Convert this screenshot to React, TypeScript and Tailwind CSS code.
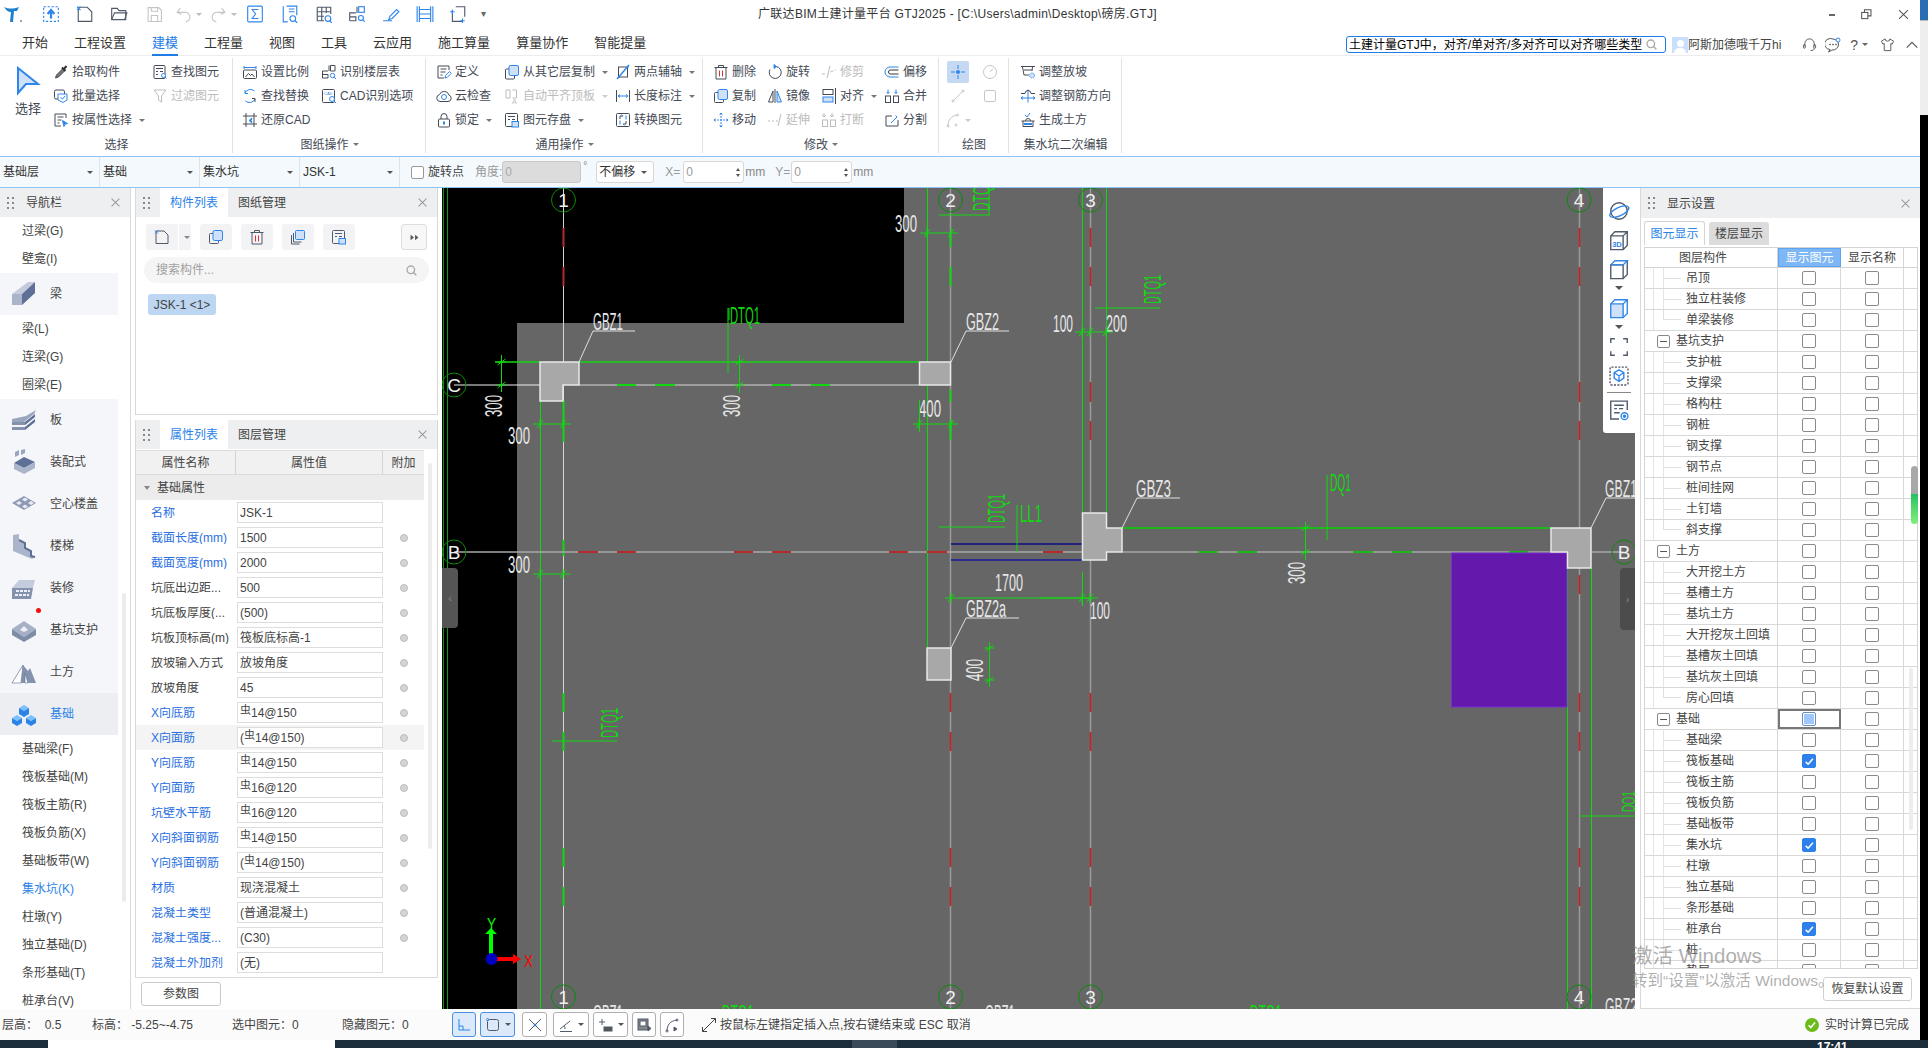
import React from 'react';

const B = '#2f86ea';
const F = '#cfe1f8';

type P = { children: React.ReactNode; s?: number; className?: string };
const I = ({ children, s = 16, className = '' }: P) => (
  <svg viewBox="0 0 16 16" width={s} height={s} fill="none" stroke="currentColor" strokeWidth="1" className={`shrink-0 ${className}`}>
    {children}
  </svg>
);

const icons: Record<string, React.ReactNode> = {
  pick: <><path d="M2.5 14l1-3 6-6 2 2-6 6z" fill="#777" /><path d="M9 3.5l3.5 3.5M11 5l2.5-3" stroke="#333" strokeWidth="2" /></>,
  batch: <><rect x="1.5" y="2" width="10" height="9" rx="1.5" /><path d="M5 6h9v6l-4 2.5L5 12z" stroke={B} fill="#fff" /><path d="M7.5 9.5l2 1.5 2.5-3" stroke={B} /></>,
  attr: <><path d="M13 6V2H2v12h6" /><path d="M4.5 5h6M4.5 8h4M4.5 11h2" /><path d="M9.5 8.5l5 3-2.5.6-1 2.4z" fill={B} stroke={B} /></>,
  find: <><rect x="2" y="1.5" width="11" height="13" rx="1" /><path d="M4 4.5h7M4 7.5h2M8 7.5h3M4 10.5h2" /><circle cx="11.5" cy="11.5" r="2" stroke={B} fill="#fff" /><path d="M13 13l1.5 1.5" stroke={B} /></>,
  filter: <><path d="M2 2h12L9.5 8v6l-3-2V8z" /></>,
  scale: <><path d="M2 2v3M14 2v3M2 3.5h12" stroke={B} /><rect x="1.5" y="6" width="13" height="8.5" rx="1" /><path d="M3.5 13l3-3.5 2 2 1.5-1.5 2.5 3" /></>,
  swap: <><path d="M12.5 3A6 6 0 0 0 3 5M3.5 13a6 6 0 0 0 9.5-2" stroke={B} /><path d="M3 2v3.5h3" stroke={B} /><path d="M13 14v-3.500h-3" /></>,
  restore: <><path d="M1 4h14M1 12h14M4 1v14M12 1v14" /><path d="M10 6L7 8.500l3 2.500-1-2.500z" fill={B} stroke={B} /></>,
  floor: <><path d="M8 1.500v5.500M1.500 14V7H7M1.500 10.500H7V14H1.500" /><path d="M9.500 1.500H14V7H9.500z" /><circle cx="11.500" cy="11.500" r="2.200" stroke={B} /><path d="M13 13l2 2" stroke={B} /></>,
  cad: <><rect x="1.500" y="1.500" width="12" height="13" rx="1" /><text x="3" y="6.500" fontSize="4" fill={B} stroke="none">CAD</text><circle cx="11" cy="11" r="2.500" stroke={B} fill="#fff" /><path d="M13 13l2 2" stroke={B} /></>,
  define: <><path d="M13 6V2H2v12h6" /><path d="M4.500 5h6M4.500 8h5M4.500 11h2" /><path d="M9 14l.5-2.500 4-4 1.800 1.800-4 4z" stroke={B} /></>,
  cloud: <><path d="M4 13.500a3.500 3.500 0 0 1-.5-6.900 5 5 0 0 1 9.500.5 3.300 3.300 0 0 1-1 6.400z" /><circle cx="8" cy="9" r="2.500" stroke={B} /></>,
  lock: <><rect x="2.500" y="7" width="11" height="8" rx="1" /><path d="M5 7V4.500a3 3 0 0 1 6 0V7" /><path d="M8 9.500v3" stroke={B} strokeWidth="2" /></>,
  fromfloor: <><rect x="1.500" y="5" width="9" height="10" rx="1" /><rect x="5" y="1.500" width="9.500" height="10" rx="1.500" fill={F} stroke={B} /></>,
  autotop: <><path d="M2 2h4v8H2zM8.500 2h4v8h-4" /><text x="8" y="15.500" fontSize="7" fill="currentColor" stroke="none">A</text></>,
  save: <><rect x="1.500" y="1.500" width="12" height="13" rx="1" /><path d="M4 4.500h7M4 7.500h2M8 7.500h3" /><rect x="8" y="9.500" width="6.500" height="5.500" fill={F} stroke={B} /></>,
  axis: <><rect x="3.500" y="3" width="9" height="10" /><path d="M2 15L14 1" stroke={B} strokeWidth="1.500" /><path d="M3.500 13h1M12.500 3h1" stroke={B} strokeWidth="2" /></>,
  length: <><path d="M1.500 2v12M14.500 2v12" /><path d="M3 8h10M3 8l2-1.500M3 8l2 1.500M13 8l-2-1.500M13 8l-2 1.500" stroke={B} /></>,
  convert: <><rect x="1.500" y="1.500" width="13" height="13" rx="1" /><path d="M5 7V4h3M11 9v3H8" /><path d="M8 4l-1.500-1.500M8 12l1.500 1.500M11 3.500v4M5 8.500v4" stroke={B} /></>,
  del: <><path d="M1.500 3.500h13M5.500 3V1.500h5V3" /><path d="M3 3.500h10V15H3z" /><path d="M6.500 6.500v6M9.500 6.500v6" stroke="#e03030" /></>,
  rotate: <><path d="M9 2.500a6 6 0 1 1-6 3" /><path d="M7 .5l2.500 2-2.500 2z" fill={B} stroke={B} /></>,
  trim: <><path d="M1 10h4M7 10l.5-.2M9.500 8l5-2" strokeDasharray="3 1.500" /><path d="M6 14L9 2" /></>,
  offset: <><path d="M14.500 3H6a5 5 0 0 0 0 10h8.500" stroke={B} /><path d="M14.500 6H6.500a2 2 0 0 0 0 4h8" stroke="#333" /></>,
  copy: <><rect x="1.500" y="4.500" width="9" height="10" rx="1" /><rect x="5" y="1.500" width="9.500" height="10" rx="1.500" fill={F} stroke={B} /></>,
  mirror: <><path d="M8 1v14" /><path d="M6 3L1.500 14H6z" /><path d="M10 3l4.500 11H10z" stroke={B} fill={F} /></>,
  align: <><rect x="2" y="1.500" width="10" height="5" /><rect x="2" y="9" width="10" height="5" stroke={B} fill={F} /><path d="M14.500 0v16" /></>,
  merge: <><path d="M4 1.500v4M12 1.500v4M2.500 4L4 5.500 5.500 4M10.500 4l1.500 1.500L13.500 4" stroke={B} /><rect x="1.500" y="8" width="5" height="6.500" /><rect x="9.500" y="8" width="5" height="6.500" /></>,
  move: <path d="M8 1v14M1 8h14M8 1L6.500 3M8 1l1.500 2M8 15l-1.500-2M8 15l1.500-2M1 8l2-1.500M1 8l2 1.500M15 8l-2-1.500M15 8l-2 1.500" stroke={B} strokeDasharray="2 1" />,
  extend: <path d="M1 9h2M5 9h2M9 9h2M11 14l3-12" />,
  breakk: <><path d="M3 1v3M11 1v3M1 3l2 2 2-2M9 3l2 2 2-2" /><rect x="1.500" y="8" width="5" height="6.500" /><rect x="9.500" y="8" width="5" height="6.500" /></>,
  split: <><path d="M14 8v6H2V4h6" /><path d="M7 11l6-6-1.500-1.500" stroke={B} /></>,
  snap: <path d="M8 1v4M8 11v4M1 8h4M11 8h4" stroke={B} />,
  dial: <><circle cx="8" cy="8" r="6.500" /><path d="M8 8l3-3.500" /></>,
  line: <><path d="M3 13L13 3" /><circle cx="3" cy="13" r="1" /><circle cx="13" cy="3" r="1" /></>,
  rect: <rect x="2.500" y="2.500" width="11" height="11" rx="1.500" />,
  arc: <><path d="M3 14c0-6 3-10 9-11" /><circle cx="3" cy="14" r="1" /><circle cx="12.500" cy="3" r="1" /><circle cx="11" cy="13" r="1" /></>,
  slope: <><path d="M1 2.500h14" /><path d="M2.500 3l1.500 8h5" /><path d="M12.500 3l-.5 4M4 6h8" /><circle cx="12" cy="11.500" r="2.500" fill={F} stroke={B} strokeDasharray="1 1" /></>,
  rebar: <><path d="M8 1.500v13M1 10h14" stroke={B} /><path d="M1 5.500h4a3 3 0 0 1 6 0h4" /><path d="M1 10l2-1.500M1 10l2 1.500M15 10l-2-1.500M15 10l-2 1.500" stroke={B} /></>,
  earth: <><path d="M1.500 9h13" /><path d="M3 9v5.500h10V9" /><path d="M5.500 9a2.500 2.500 0 0 1 5 0" /><path d="M5 3l2 2 3-4" stroke={B} /><path d="M4 12h8" stroke={B} strokeWidth="2" /></>,
};

const Ar = ({ c = '#777' }: { c?: string }) => <span className="inline-block w-0 h-0 border-x-[3px] border-x-transparent border-t-[3px] ml-1" style={{ borderTopColor: c }} />;

const Item = ({ ic, t, arrow, off }: { ic: string; t: string; arrow?: boolean; off?: boolean }) => (
  <div className={`h-6 flex items-center gap-[3px] whitespace-nowrap ${off ? 'text-[#bcbcbc]' : 'text-[#444a55]'}`}>
    <I>{icons[ic]}</I>
    <span>{t}</span>
    {arrow && <Ar c={off ? '#ccc' : '#777'} />}
  </div>
);

type It = [string, string, boolean?, boolean?];
const Col = ({ w, items }: { w: string; items: It[] }) => (
  <div className={`flex flex-col ${w}`}>
    {items.map((i) => <Item key={i[1]} ic={i[0]} t={i[1]} arrow={i[2]} off={i[3]} />)}
  </div>
);

const Group = ({ w, pl, label, arrow, children }: { w: string; pl: string; label: string; arrow?: boolean; children: React.ReactNode }) => (
  <div className={`relative ${w} flex flex-col pt-1 pb-[2px] after:absolute after:right-0 after:top-[2px] after:bottom-[3px] after:w-px after:bg-[#e2e2e2]`}>
    <div className={`flex flex-1 ${pl}`}>{children}</div>
    <div className="h-[22px] pt-[3px] flex items-center justify-center text-[#444a55]">{label}{arrow && <Ar />}</div>
  </div>
);

const Ribbon = () => (
  <div className="h-[100px] flex bg-white">
    <Group w="w-[233px]" pl="" label="选择">
      <div className="w-[53px] flex flex-col items-start pl-[15px] text-[#444a55]">
        <svg width="26" height="30" viewBox="0 0 26 30" className="mt-[6px]"><path d="M3 2l20 16H11L3 27z" fill={F} stroke={B} strokeWidth="2" /></svg>
        <span className="mt-[6px] text-[13px]">选择</span>
      </div>
      <Col w="w-[99px]" items={[['pick', '拾取构件'], ['batch', '批量选择'], ['attr', '按属性选择', true]]} />
      <Col w="" items={[['find', '查找图元'], ['filter', '过滤图元', false, true]]} />
    </Group>
    <Group w="w-[193px]" pl="pl-[9px]" label="图纸操作" arrow>
      <Col w="w-[79px]" items={[['scale', '设置比例'], ['swap', '查找替换'], ['restore', '还原CAD']]} />
      <Col w="" items={[['floor', '识别楼层表'], ['cad', 'CAD识别选项']]} />
    </Group>
    <Group w="w-[277px]" pl="pl-[10px]" label="通用操作" arrow>
      <Col w="w-[68px]" items={[['define', '定义'], ['cloud', '云检查'], ['lock', '锁定', true]]} />
      <Col w="w-[111px]" items={[['fromfloor', '从其它层复制', true], ['autotop', '自动平齐顶板', true, true], ['save', '图元存盘', true]]} />
      <Col w="" items={[['axis', '两点辅轴', true], ['length', '长度标注', true], ['convert', '转换图元']]} />
    </Group>
    <Group w="w-[236px]" pl="pl-[10px]" label="修改" arrow>
      <Col w="w-[54px]" items={[['del', '删除'], ['copy', '复制'], ['move', '移动']]} />
      <Col w="w-[54px]" items={[['rotate', '旋转'], ['mirror', '镜像'], ['extend', '延伸', false, true]]} />
      <Col w="w-[63px]" items={[['trim', '修剪', false, true], ['align', '对齐', true], ['breakk', '打断', false, true]]} />
      <Col w="" items={[['offset', '偏移'], ['merge', '合并'], ['split', '分割']]} />
    </Group>
    <Group w="w-[70px]" pl="pl-[8px]" label="绘图">
      <div className="w-[35px] flex flex-col items-start">
        <div className="w-[22px] h-[22px] mt-[1px] mb-[1px] rounded-[2px] bg-[#c5daf2] flex items-center justify-center relative text-[#3a6fb0]"><I>{icons.snap}</I><span className="absolute w-1 h-1 rounded-full bg-[#2f86ea]" /></div>
        <div className="h-6 w-[22px] flex items-center justify-center text-[#c6c6c6]"><I>{icons.line}</I></div>
        <div className="h-6 w-[22px] flex items-center justify-center text-[#c6c6c6]"><I>{icons.arc}</I><Ar c="#ccc" /></div>
      </div>
      <div className="flex flex-col text-[#c6c6c6]">
        <div className="h-6 flex items-center"><I>{icons.dial}</I></div>
        <div className="h-6 flex items-center"><I>{icons.rect}</I></div>
      </div>
    </Group>
    <Group w="w-[113px]" pl="pl-[11px]" label="集水坑二次编辑">
      <Col w="" items={[['slope', '调整放坡'], ['rebar', '调整钢筋方向'], ['earth', '生成土方']]} />
    </Group>
  </div>
);

const QuickBar = () => (
  <div className="w-[500px] flex items-center pl-[3px] text-[#4f5a6b]">
    <svg width="22" height="20" viewBox="0 0 22 20" className="mr-[17px]"><path d="M1 3c5 2 9 2 15 0l-2 4h-3l-1 11H7L8 8C5 8 3 6 1 3z" fill="#1f7fd0" /><circle cx="18" cy="17" r="1" fill="#888" /></svg>
    <I s={18} className="mr-[16px]"><rect x="1.500" y="1.500" width="13" height="13" stroke={B} strokeDasharray="2 1.500" /><path d="M8 12V5M5 8l3-3.500L11 8" stroke={B} strokeWidth="2" /></I>
    <I s={18} className="mr-[16px]"><path d="M2 2h8l4 4v8.500H2z" /><path d="M1 1.500l3 3M4 1.500l-3 3" stroke={B} /></I>
    <I s={18} className="mr-[18px]"><path d="M1.500 13V3h5l1.500 2h6v8z" /><path d="M1.500 13l2.500-6h11l-2 6" /></I>
    <I s={17} className="mr-[12px] text-[#c4c4c4]"><path d="M2 1.500h10l2.500 2.500v10.500H2z" /><path d="M5 1.500V5h6V1.500M5 14.500V9h6v5.500" /></I>
    <I s={17} className="text-[#c4c4c4]"><path d="M5 2L2 6l4 2M2 6h7a4.500 4.500 0 0 1 1 9" /></I><Ar c="#bbb" />
    <I s={17} className="ml-[8px] text-[#c4c4c4]"><path d="M11 2l3 4-4 2M14 6H7a4.500 4.500 0 0 0-1 9" /></I><Ar c="#bbb" />
    <I s={18} className="ml-[9px] text-[#2f86ea]"><rect x="1.500" y="1" width="13" height="14" rx="1" /><path d="M11 4H5.500l3 4-3 4H11" /></I>
    <I s={18} className="ml-[17px]"><path d="M2 1v14h4M5 1h9v8M7 3.500h5M7 6h5" stroke={B} /><circle cx="10.500" cy="12" r="2.500" stroke={B} /><path d="M12.500 14l2 2" stroke={B} /></I>
    <I s={18} className="ml-[16px]"><path d="M2 2h12v6M2 2v12h6M2 6h12M2 10h6M6 2v12M10 2v5" /><circle cx="11.500" cy="12" r="2.500" stroke={B} /><path d="M13 14l2 2" stroke={B} /></I>
    <I s={18} className="ml-[15px]"><path d="M8 1.500v5.500M1.500 14V7H7M1.500 10.500H7V14H1.500" /><rect x="9.500" y="1.500" width="5" height="5" stroke={B} /><circle cx="11.500" cy="11.500" r="2.200" stroke={B} /><path d="M13 13l2 2" stroke={B} /></I>
    <I s={18} className="ml-[16px] text-[#2f86ea]"><path d="M1 14h8M6 13l1-3 6-6 2 2-6 6z" /></I>
    <I s={18} className="ml-[16px] text-[#2f86ea]"><path d="M3 1v14M13 1v14M3 4h10M3 8h10M3 12h10M1 1v14M15 1v14" /></I>
    <I s={18} className="ml-[15px]"><path d="M6 1.500h8v9M3 5v9.500h9" /><path d="M1 6h4M3 4v4" stroke={B} /><path d="M10 14h4M12 12v4" stroke={B} /></I>
    <span className="ml-[14px] text-[10px] leading-none text-[#666]">▾</span>
  </div>
);

const TitleBar = () => (
  <div className="h-7 flex items-center bg-white relative">
    <QuickBar />
    <div className="ml-[258px] w-[500px] whitespace-nowrap text-[#333] tracking-[0.3px]">广联达BIM土建计量平台 GTJ2025 - [C:\Users\admin\Desktop\磅房.GTJ]</div>
    <div className="ml-[571px] flex items-center gap-[26px] text-[#555]">
      <span className="w-[6px] h-[2px] bg-[#666] mt-[2px]" />
      <I s={11}><rect x="1" y="5" width="9" height="9" strokeWidth="1.500" /><path d="M5 5V1h9.500v9H10" strokeWidth="1.500" /></I>
      <I s={11}><path d="M1.500 1.500l13 13M14.500 1.500l-13 13" strokeWidth="1.500" /></I>
    </div>
  </div>
);

const tabs = ['开始', '工程设置', '建模', '工程量', '视图', '工具', '云应用', '施工算量', '算量协作', '智能提量'];
const TabBar = () => (
  <div className="h-7 flex items-center bg-white border-b border-[#ededed] text-[13px] text-[#333]">
    <div className="w-[1346px] h-full flex items-center pl-[22px] pt-[2px] gap-[26px]">
      {tabs.map((t) => (
        <span key={t} className={t === '建模' ? 'h-full flex items-center text-[#1d7ce6] border-b-2 border-[#1d7ce6] -mb-px' : ''}>{t}</span>
      ))}
    </div>
    <div className="w-[320px] h-[17px] flex items-center border border-[#1d7ce6] rounded-[3px] pl-[2px] pr-[8px] justify-between text-[12px] text-black whitespace-nowrap overflow-hidden mt-[6px]">
      <span>土建计量GTJ中，对齐/单对齐/多对齐可以对齐哪些类型</span>
      <I s={11} className="text-[#aaa]"><circle cx="7" cy="7" r="5.500" strokeWidth="2" /><path d="M11 11l4 4" strokeWidth="2" /></I>
    </div>
    <div className="ml-[6px] w-4 h-4 bg-[#c8e0fb] overflow-hidden flex flex-col items-center justify-end mt-[6px]"><span className="w-[7px] h-[7px] rounded-full bg-white" /><span className="w-3 h-[5px] rounded-t-full bg-white mt-px" /></div>
    <span className="text-[12px] text-[#444] whitespace-nowrap mt-[6px]">阿斯加德哦千万hi</span>
    <div className="ml-[21px] flex items-center text-[#555] mt-[6px]">
      <I s={15}><path d="M3 10V7a5 5 0 0 1 10 0v3" /><rect x="1.500" y="8" width="2" height="4" rx="1" /><rect x="12.500" y="8" width="2" height="4" rx="1" /><path d="M13 12c0 2-2 2.500-4 2.500" /></I>
      <I s={16} className="ml-[8px]"><path d="M8 2a6 5.500 0 1 0-3 10.500L3.500 15l3.500-2A6 5.500 0 0 0 8 2z" /><circle cx="5" cy="7.500" r=".5" /><circle cx="8" cy="7.500" r=".5" /><circle cx="11" cy="7.500" r=".5" /><circle cx="13" cy="3" r="2" stroke={B} fill="#fff" /></I>
      <span className="ml-[9px] text-[14px] leading-none">?</span><Ar c="#666" />
      <I s={15} className="ml-[12px]"><path d="M5.500 2L1.500 4.500l1.500 3 1.500-.5v7.500h7V7l1.500.5 1.500-3L10.500 2a2.500 2.500 0 0 1-5 0z" /></I>
      <I s={14} className="ml-[10px]"><path d="M2 11l6-6 6 6" strokeWidth="1.300" /></I>
    </div>
  </div>
);

const Sel = ({ t }: { t: string }) => (
  <div className="w-[100px] h-full flex items-center justify-between px-[3px] pr-[6px] border-r border-[#dde5ea] text-[#333]">
    <span>{t}</span><Ar c="#555" />
  </div>
);

const Num = ({ w }: { w: string }) => (
  <div className={`${w} h-[22px] bg-white border border-[#d8d8d8] rounded-[3px] flex items-center justify-between pl-[2px] pr-[3px] text-[#999]`}>
    0
    <span className="flex flex-col gap-[3px]">
      <span className="w-0 h-0 border-x-[2.500px] border-x-transparent border-b-[3px] border-b-[#555]" />
      <span className="w-0 h-0 border-x-[2.500px] border-x-transparent border-t-[3px] border-t-[#555]" />
    </span>
  </div>
);

const OptionBar = () => (
  <div className="h-8 bg-[#f3f9fc] border-t border-b border-[#8fc3f3] flex items-center text-[#444]">
    <Sel t="基础层" /><Sel t="基础" /><Sel t="集水坑" /><Sel t="JSK-1" />
    <span className="ml-[11px] w-[13px] h-[13px] bg-white border border-[#999] rounded-[2px]" />
    <span className="ml-1">旋转点</span>
    <span className="ml-[11px] text-[#999]">角度:</span>
    <div className="w-[79px] h-[22px] bg-[#dcdcdc] border border-[#c8c8c8] rounded-[3px] flex items-center pl-[2px] text-[#aaa]">0</div>
    <span className="ml-[2px] w-[13px] text-[#888] self-start mt-1 text-[10px]">°</span>
    <div className="w-[58px] h-[22px] bg-white border border-[#d8d8d8] rounded-[3px] flex items-center justify-between pl-[2px] pr-[6px] text-[#333]">不偏移<Ar c="#555" /></div>
    <span className="ml-[11px] w-[18px] text-[#999]">X=</span>
    <Num w="w-[61px]" />
    <span className="ml-[1px] text-[#888]">mm</span>
    <span className="ml-[10px] w-[16px] text-[#999]">Y=</span>
    <Num w="w-[61px]" />
    <span className="ml-[1px] text-[#888]">mm</span>
  </div>
);

const Grip = () => (
  <span className="grid grid-cols-2 gap-x-[3px] gap-y-[3px] w-[7px]">
    {[0, 1, 2, 3, 4, 5].map((i) => <span key={i} className="w-[2px] h-[2px] bg-[#888]" />)}
  </span>
);
const Close = () => <I s={9} className="text-[#999]"><path d="M1 1l14 14M15 1L1 15" strokeWidth="1.800" /></I>;

const PanelHead = ({ tabs: t }: { tabs: [string, string] }) => (
  <div className="h-[29px] bg-[#eeeff1] flex items-center shrink-0">
    <span className="ml-[7px] w-[17px]"><Grip /></span>
    <span className="w-[68px] h-full bg-white text-[#2a84e8] flex items-center justify-center pt-px">{t[0]}</span>
    <span className="w-[68px] text-center text-[#444] pt-px">{t[1]}</span>
    <span className="ml-auto mr-[10px]"><Close /></span>
  </div>
);

const nv = (c: React.ReactNode) => <svg width="26" height="26" viewBox="0 0 26 26" className="shrink-0">{c}</svg>;
const navIcons: Record<string, React.ReactNode> = {
  beam: nv(<><path d="M1 13h10v11H1z" fill="#aab4ca" /><path d="M1 13L17 1h7L11 13z" fill="#c4cbdc" /><path d="M11 13L24 1v11L11 24z" fill="#5f7096" /></>),
  slab: nv(<><path d="M1 12L15 9l10-6-2 4-10 8H1z" fill="#9aa6bf" /><path d="M1 15h13v3H1zM1 20h13v3H1z" fill="#8492ad" /><path d="M14 15l10-8v3l-10 8zM14 20l10-8v3l-10 8z" fill="#5f7096" /></>),
  pre: nv(<><path d="M3 14l10-6 11 5-11 6z" fill="#5f7096" /><path d="M3 14v6l10 5v-6zM13 19v6l11-6v-6z" fill="#aab4ca" /><path d="M4 3l4-2v5l-4 2zM10 1l4-1v4l-4 2z" fill="#9aa6bf" /></>),
  hollow: nv(<><path d="M1 12L13 5l12 7-12 7z" fill="#8d9ab5" /><path d="M5 12l3-2 3 2-3 2zM11 8.500l3-2 3 2-3 2zM11 15.500l3-2 3 2-3 2zM17 12l3-2 3 2-3 2z" fill="#e8ebf2" /></>),
  stair: nv(<><path d="M2 2l6-1v6l6 3v5l6 3v5l4 1-3 2L2 18z" fill="#aab4ca" /><path d="M8 7l6 3v5l6 3v5l4 1" fill="none" stroke="#5f7096" strokeWidth="2" /></>),
  deco: nv(<><path d="M1 13L8 5h16l-2 8z" fill="#c4cbdc" /><path d="M1 13h21l-2 11H1z" fill="#8492ad" /><path d="M5 16h14M4 20h14" stroke="#eef0f5" strokeWidth="2" strokeDasharray="3 1" /></>),
  pit: nv(<><path d="M1 12L13 4l12 8-12 8z" fill="#a5b0c6" /><path d="M1 12v6l12 7v-5zM13 20v5l12-7v-6z" fill="#7e8ca8" /><path d="M9 13l4-4 4 4-4 2z" fill="#eef0f5" /></>),
  earth: nv(<><path d="M1 24L12 6l5 6 2-3 6 15z" fill="#8492ad" /><path d="M1 24L12 6l-2 18zM14 14l3 10h-3z" fill="#fff" stroke="#5f7096" strokeWidth=".6" /></>),
  found: nv(<><path d="M8 7l5-3 5 3-5 3z" fill="#7cc0ff" /><path d="M8 7v6l5 3v-6zM18 7v6l-5 3v-6z" fill="#2a84e8" /><path d="M1 17l5-3 5 3-5 3zM15 17l5-3 5 3-5 3z" fill="#7cc0ff" /><path d="M1 17v5l5 3v-5zM11 17v5l-5 3v-5zM15 17v5l5 3v-5zM25 17v5l-5 3v-5z" fill="#2a84e8" /></>),
};

type Nav = { t: string; ic?: string; blue?: boolean; active?: boolean; dot?: boolean };
const navItems: Nav[] = [
  { t: '过梁(G)' }, { t: '壁龛(I)' }, { t: '梁', ic: 'beam' }, { t: '梁(L)' }, { t: '连梁(G)' }, { t: '圈梁(E)' },
  { t: '板', ic: 'slab' }, { t: '装配式', ic: 'pre' }, { t: '空心楼盖', ic: 'hollow' }, { t: '楼梯', ic: 'stair' }, { t: '装修', ic: 'deco' },
  { t: '基坑支护', ic: 'pit', dot: true }, { t: '土方', ic: 'earth' }, { t: '基础', ic: 'found', active: true },
  { t: '基础梁(F)' }, { t: '筏板基础(M)' }, { t: '筏板主筋(R)' }, { t: '筏板负筋(X)' }, { t: '基础板带(W)' }, { t: '集水坑(K)', blue: true },
  { t: '柱墩(Y)' }, { t: '独立基础(D)' }, { t: '条形基础(T)' }, { t: '桩承台(V)' },
];

const NavPanel = () => (
  <div className="w-[131px] h-full flex flex-col border-r border-[#d9d9d9] overflow-hidden bg-white relative">
    <div className="h-[29px] bg-[#eeeff1] flex items-center shrink-0 pl-[7px] pr-[10px]">
      <Grip /><span className="ml-[12px] text-[#444] pt-px">导航栏</span><span className="ml-auto"><Close /></span>
    </div>
    <div className="w-[118px] flex flex-col text-[#444]">
      {navItems.map((n) => n.ic ? (
        <div key={n.t} className={`h-[42px] shrink-0 flex items-center pl-[11px] gap-[13px] relative ${n.active ? 'bg-[#eceef1] text-[#2a84e8]' : 'bg-[#f5f6fa]'}`}>
          {navIcons[n.ic]}<span>{n.t}</span>
          {n.dot && <span className="absolute left-[36px] top-[-1px] w-[5px] h-[5px] rounded-full bg-[#f01010]" />}
        </div>
      ) : (
        <div key={n.t} className={`h-7 shrink-0 flex items-center pl-[22px] ${n.blue ? 'text-[#2a84e8]' : ''}`}>{n.t}</div>
      ))}
    </div>
    <span className="absolute left-[122px] top-[405px] w-[4px] h-[309px] rounded-full bg-[#ececec]" />
  </div>
);

const props: [string, string, boolean][] = [
  ['名称', 'JSK-1', true], ['截面长度(mm)', '1500', true], ['截面宽度(mm)', '2000', true], ['坑底出边距...', '500', false],
  ['坑底板厚度(...', '(500)', false], ['坑板顶标高(m)', '筏板底标高-1', false], ['放坡输入方式', '放坡角度', false], ['放坡角度', '45', false],
  ['X向底筋', '*14@150', true], ['X向面筋', '(*14@150)', true], ['Y向底筋', '*14@150', true], ['Y向面筋', '*16@120', true],
  ['坑壁水平筋', '*16@120', true], ['X向斜面钢筋', '*14@150', true], ['Y向斜面钢筋', '(*14@150)', true], ['材质', '现浇混凝土', true],
  ['混凝土类型', '(普通混凝土)', true], ['混凝土强度...', '(C30)', true], ['混凝土外加剂', '(无)', true],
];

const Rebar = ({ v }: { v: string }) => {
  const i = v.indexOf('*');
  if (i < 0) return <>{v}</>;
  return <>{v.slice(0, i)}<span className="relative -top-[2px] text-[11px]">虫</span>{v.slice(i + 1)}</>;
};

const ComponentPanel = () => (
  <div className="h-[227px] border border-[#d9d9d9] border-t-0 bg-white flex flex-col">
    <PanelHead tabs={['构件列表', '图纸管理']} />
    <div className="flex items-center h-[26px] mt-[7px] pl-[10px] pr-[10px] text-[#4f5a6b]">
      <div className="w-8 h-full bg-[#f3f3f5] rounded-l-[3px] flex items-center justify-center"><I><path d="M2 2h8l4 4v8.500H2z" /><path d="M1 1.500l3 3M4 1.500l-3 3" stroke={B} /></I></div>
      <div className="w-3 h-full ml-px mr-[9px] bg-[#f3f3f5] flex items-center justify-center"><Ar c="#888" /></div>
      {['copy', 'del', 'stack', 'saveb'].map((k) => (
        <div key={k} className="w-8 h-full mr-[9px] bg-[#f3f3f5] rounded-[3px] flex items-center justify-center">
          <I>{k === 'stack' ? <><path d="M1.500 6v9h8M3.500 4v9h8" /><rect x="5.500" y="1.500" width="9" height="9" rx="1" fill={F} stroke={B} /></> : k === 'saveb' ? icons.save : icons[k]}</I>
        </div>
      ))}
      <div className="ml-auto w-[26px] h-full border border-[#ddd] rounded-[3px] bg-[#f7f7f7] flex items-center justify-center text-[#555]">
        <I s={9}><path d="M1 3l6 5-6 5zM9 3l6 5-6 5z" fill="#555" stroke="none" /></I>
      </div>
    </div>
    <div className="mx-2 mt-[7px] h-[26px] rounded-full bg-[#f5f5f5] flex items-center justify-between pl-3 pr-3 text-[#a0a0a0]">
      搜索构件...
      <I s={11} className="text-[#aaa]"><circle cx="7" cy="7" r="5.500" strokeWidth="2" /><path d="M11 11l4 4" strokeWidth="2" /></I>
    </div>
    <div className="ml-3 mt-[11px] w-[68px] h-[21px] rounded-[3px] bg-[#bdd7f3] flex items-center justify-center text-[#444] whitespace-nowrap">JSK-1 &lt;1&gt;</div>
  </div>
);

const PropertyPanel = () => (
  <div className="mt-[5px] h-[558px] border border-[#d9d9d9] border-t-0 bg-white flex flex-col relative overflow-hidden">
    <PanelHead tabs={['属性列表', '图层管理']} />
    <div className="w-[288px] shrink-0 flex flex-col mt-px">
      <div className="h-[25px] bg-[#f1f1f1] border-y border-[#dcdcdc] flex text-[#444]">
        <span className="w-[100px] flex items-center justify-center border-r border-[#d4d4d4]">属性名称</span>
        <span className="w-[147px] flex items-center justify-center border-r border-[#d4d4d4]">属性值</span>
        <span className="flex-1 flex items-center justify-center">附加</span>
      </div>
      <div className="h-[25px] bg-[#ececec] flex items-center pl-2 gap-[7px] text-[#444]">
        <span className="w-0 h-0 border-x-[3px] border-x-transparent border-t-[4px] border-t-[#888]" />基础属性
      </div>
      {props.map(([k, v, blue], i) => (
        <div key={k} className={`h-[25px] shrink-0 flex items-center ${k === 'X向面筋' ? 'bg-[#f4f4f4]' : ''}`}>
          <span className={`w-[101px] pl-[15px] whitespace-nowrap overflow-hidden ${blue ? 'text-[#2a6fe0]' : 'text-[#444]'}`}>{k}</span>
          <span className="w-[146px] h-[21px] bg-white border border-[#dddddd] flex items-center pl-[2px] text-[#444] whitespace-nowrap"><Rebar v={v} /></span>
          {i > 0 && i < 18 && <span className="ml-[17px] w-2 h-2 rounded-full bg-[#d4d4d4] border border-[#bcbcbc]" />}
        </div>
      ))}
    </div>
    <span className="absolute right-[5px] top-[43px] w-[4px] h-[386px] rounded-full bg-[#ececec]" />
  </div>
);

const MiddlePanels = () => (
  <div className="ml-[4px] w-[303px] h-full flex flex-col">
    <ComponentPanel />
    <PropertyPanel />
    <div className="ml-[6px] mt-[4px] w-20 h-6 bg-white border border-[#c9c9c9] rounded-[3px] flex items-center justify-center text-[#444]">参数图</div>
  </div>
);

const GR = '#10d810';
const WH = '#d4d4d4';
const RED = '#b52a2a';

type TxtP = { x: number; y: number; w: number; t: string; c?: string; rot?: boolean; fs?: number };
const Txt = ({ x, y, w, t, c = '#e6e6e6', rot, fs = 23 }: TxtP) => (
  <text x={x} y={y} textLength={w} lengthAdjust="spacingAndGlyphs" fontSize={fs} fontFamily="Liberation Sans, sans-serif" fill={c} stroke="none" transform={rot ? `rotate(-90 ${x} ${y})` : undefined}>{t}</text>
);

const L = ({ d, c = GR, w = 1 }: { d: string; c?: string; w?: number }) => <path d={d} stroke={c} strokeWidth={w} fill="none" />;

const tick = (x: number, y: number) => `M${x - 3} ${y + 4}L${x + 3} ${y - 4}M${x} ${y - 5}V${y + 5}`;
const ticV = (x: number, y: number) => `M${x - 4} ${y + 3}L${x + 4} ${y - 3}M${x - 5} ${y}H${x + 5}`;

const vDash = (x: number, segs: [number, number][], c: string) => segs.map(([a, b]) => <L key={`${x}-${a}`} d={`M${x} ${a}V${b}`} c={c} w={2} />);
const hDash = (y: number, segs: [number, number][], c: string) => segs.map(([a, b]) => <L key={`${y}-${a}`} d={`M${a} ${y}H${b}`} c={c} w={2} />);

const up: [number, number][] = [[228, 247], [267, 286]];
const mid: [number, number][] = [[382, 402], [421, 440]];
const low: [number, number][] = [[693, 712], [732, 751], [848, 867], [887, 906]];

const Bubble = ({ x, y, t }: { x: number; y: number; t: string }) => (
  <g>
    <circle cx={x} cy={y} r="12" stroke="#0a8a0a" strokeWidth="1" fill="none" />
    <text x={x} y={y + 7} textAnchor="middle" fontSize="19" fontFamily="Liberation Sans, sans-serif" fill="#f0f0f0">{t}</text>
  </g>
);

const Drawing = () => (
  <svg viewBox="442 188 1193 821" width="1193" height="821" className="block">
    <rect x="442" y="188" width="1193" height="821" fill="#000" />
    <path d="M904 188H1635V1009H517V323H904z" fill="#666" />
    <L d="M443.500 188V1009M447.500 188V1009" c="#0c9a0c" />
    <L d="M540.500 401V1009M927.500 188V362M927.500 385V648M1082.500 188V513M1106.500 188V513M1567.500 568V1009M1591.500 568V1009" />
    <L d="M563.500 188V1009" c={WH} />
    <L d="M950.500 188V1009M1090.500 188V1009M1579.500 188V1009" c="#9a9a9a" w={1.500} />
    {vDash(563.500, up, RED)}
    {vDash(950.500, [[236, 247], [267, 286], [390, 402], [421, 440]], GR)}
    {vDash(950.500, low, RED)}
    {vDash(563.500, [[400, 442], [540, 556]], GR)}
    {vDash(563.500, low, GR)}
    {vDash(1090.500, [...up, ...mid, ...low], RED)}
    {vDash(1579.500, [...up, ...mid, ...low, [575, 594]], RED)}
    <L d="M454 385H563" c="#f0f0f0" />
    <L d="M579 385H919" c={WH} />
    <L d="M454 552H1082" c="#a8a8a8" w={1.500} />
    <L d="M1122 552H1551M1591 552H1624" c="#a8a8a8" w={1.500} />
    {hDash(385, [[617, 636], [655, 675], [772, 791], [811, 830]], GR)}
    {hDash(552, [[578, 598], [617, 636], [734, 753], [772, 791], [889, 908], [927, 947], [1043, 1063]], RED)}
    {hDash(552, [[1198, 1218], [1237, 1257], [1353, 1373], [1392, 1412], [1509, 1528]], '#1cb81c')}
    <L d="M579 362H919M495 362H540" w={1.500} />
    <L d="M1122 528H1551" c="#1cb81c" w={2} />
    <L d="M951 544H1082" c="#0c0c80" w={1.500} />
    <L d="M951 560H1082" c="#2b2b8f" w={2} />
    <rect x="1451.500" y="553" width="115.500" height="154" fill="#6419ac" stroke="#7a2fd0" />
    <g fill="#a8a8a8" stroke="#e8e8e8" strokeWidth="1.500">
      <path d="M540 362H579V385H563V401H540z" />
      <path d="M919.500 362H950.500V385H919.500z" />
      <path d="M927 648H951V680H927z" />
      <path d="M1082.500 513H1106.500V528H1122V552H1106.500V560H1082.500z" />
      <path d="M1551 528H1591V568H1567.500V552H1551z" />
    </g>
    <L d="M579 362L593 331H635M951 362L966 331H1009M951 648L966 618H1019M1122 528L1137 498H1180M1591 528L1606 498H1635" c="#e0e0e0" />
    <Txt x={593} y={330} w={30} t="GBZ1" />
    <Txt x={966} y={330} w={33} t="GBZ2" />
    <Txt x={966} y={617} w={40} t="GBZ2a" />
    <Txt x={1136} y={497} w={35} t="GBZ3" />
    <Txt x={1605} y={497} w={32} t="GBZ1" />
    <Txt x={593} y={1022} w={30} t="GBZ1" />
    <Txt x={985} y={1022} w={30} t="GBZ1" />
    <Txt x={1605} y={1015} w={32} t="GBZ2" />
    <Txt x={895} y={232} w={22} t="300" />
    <Txt x={508} y={444} w={22} t="300" />
    <Txt x={508} y={573} w={22} t="300" />
    <Txt x={919} y={417} w={22} t="400" />
    <Txt x={995} y={591} w={28} t="1700" />
    <Txt x={1053} y={332} w={20} t="100" />
    <Txt x={1106} y={332} w={21} t="200" />
    <Txt x={1090} y={619} w={20} t="100" />
    <Txt x={502} y={417} w={22} t="300" rot />
    <Txt x={740} y={417} w={22} t="300" rot />
    <Txt x={983} y={681} w={22} t="400" rot />
    <Txt x={1305} y={584} w={22} t="300" rot />
    <Txt x={730} y={324} w={30} t="DTQ1" c={GR} />
    <Txt x={1020} y={522} w={22} t="LL1" c={GR} />
    <Txt x={1330} y={491} w={21} t="DQ1" c={GR} />
    <Txt x={722} y={1022} w={32} t="DTQ1" c={GR} />
    <Txt x={1250} y={1022} w={32} t="DTQ1" c={GR} />
    <Txt x={990} y={211} w={32} t="DTQ1" c={GR} rot />
    <Txt x={1005} y={523} w={29} t="DTQ1" c={GR} rot />
    <Txt x={1161} y={304} w={29} t="DTQ1" c={GR} rot />
    <Txt x={618} y={738} w={30} t="DTQ1" c={GR} rot />
    <Txt x={1635} y={812} w={21} t="DQ1" c={GR} rot fs={18} />
    <L d="M939 215H990M989 188V215M728 308V373M729 308V320M939 527H1005M1017 505V552M1095 308H1160M1327 475V540M552 741H617M1579 816H1635" />
    <L d="M920 233H958M533 424H571M913 424H958M533 574H571M945 598H1090M1075 332H1113M1040 598H1098" />
    <L d="M501.500 355V392M739.500 355V393M989.500 642V687M1305.500 522V560M1082.500 572V606" />
    <L d={`${tick(927, 233)}${tick(951, 233)}${tick(540, 424)}${tick(563, 424)}${tick(919, 424)}${tick(951, 424)}${tick(540, 574)}${tick(563, 574)}${tick(1082, 332)}${tick(1090, 332)}${tick(1106, 332)}${tick(951, 598)}${tick(1082, 598)}${tick(1090, 598)}`} />
    <L d={`${ticV(501.500, 362)}${ticV(501.500, 385)}${ticV(739.500, 362)}${ticV(739.500, 385)}${ticV(989.500, 648)}${ticV(989.500, 680)}${ticV(1305.500, 528)}${ticV(1305.500, 552)}`} />
    <L d="M919.500 400V432" />
    <Bubble x={563.500} y={200} t="1" />
    <Bubble x={950.500} y={200} t="2" />
    <Bubble x={1090.500} y={200} t="3" />
    <Bubble x={1579} y={200} t="4" />
    <Bubble x={563.500} y={997} t="1" />
    <Bubble x={950.500} y={997} t="2" />
    <Bubble x={1090.500} y={997} t="3" />
    <Bubble x={1579} y={997} t="4" />
    <Bubble x={454} y={385} t="C" />
    <Bubble x={454} y={552} t="B" />
    <Bubble x={1624} y={552} t="B" />
    <path d="M489 955V934h-4l6-6 6 6h-4V955z" fill="#0f0" />
    <path d="M495 957h18v-3l8 5-8 5v-3h-18z" fill="#f00" />
    <circle cx="491.500" cy="959" r="6" fill="#0000c0" />
    <Txt x={487} y={930} w={9} t="Y" c="#0f0" fs={16} />
    <Txt x={524} y={967} w={9} t="X" c="#f00" fs={16} />
  </svg>
);

const ViewBar = () => (
  <div className="absolute right-0 top-0 w-8 h-[245px] bg-white rounded-bl-[3px] flex flex-col items-center pt-[12px] text-[#4f5a6b]">
    <I s={22}><ellipse cx="8" cy="8" rx="6" ry="6" /><ellipse cx="8" cy="8.500" rx="7.500" ry="3" transform="rotate(-25 8 8)" stroke={B} /></I>
    <I s={22} className="mt-[7px]"><path d="M2 5l3-3h9v10l-3 3H2zM2 5h9v10M11 5l3-3" /><text x="3" y="13" fontSize="5.500" fontWeight="700" fill={B} stroke="none">3D</text></I>
    <I s={22} className="mt-[7px]"><path d="M2 5h9v10H2zM11 15l3-3V2" /><path d="M2 5l3-3h9l-3 3H2" stroke={B} /></I>
    <span className="mt-[6px] w-0 h-0 border-x-[4px] border-x-transparent border-t-[4px] border-t-[#555]" />
    <I s={22} className="mt-[7px]"><path d="M2 5h9v10H2z" fill={F} stroke={B} /><path d="M2 5l3-3h9v10l-3 3M11 5l3-3" stroke={B} /></I>
    <span className="mt-[6px] w-0 h-0 border-x-[4px] border-x-transparent border-t-[4px] border-t-[#555]" />
    <I s={22} className="mt-[7px]"><path d="M2 5V2h3M11 2h3v3M2 11v3h3M11 14h3v-3" /></I>
    <I s={22} className="mt-[7px]"><rect x="1.500" y="1.500" width="13" height="13" rx="1" strokeDasharray="1.500 1" /><path d="M8 3.500l3.500 2v4L8 12l-3.500-2.500v-4zM4.500 5.500L8 8l3.500-2.500M8 8v4" stroke={B} /></I>
    <span className="mt-[5px] w-6 h-px bg-[#888]" />
    <I s={22} className="mt-[6px]"><path d="M14 8V1.500H2v13h6" /><path d="M4.500 4.500h7M4.500 7h2M8 7h3M4.500 10h4" /><circle cx="12" cy="12.500" r="2.500" stroke={B} /><circle cx="12" cy="12.500" r=".8" fill={B} stroke={B} /></I>
  </div>
);

const Canvas = () => (
  <div className="relative ml-[4px] w-[1193px] h-full overflow-hidden bg-[#666]">
    <Drawing />
    <ViewBar />
    <div className="absolute left-0 top-[380px] w-4 h-[60px] bg-[#555] rounded-r-[4px] flex items-center justify-center text-[#888] text-[11px]">‹</div>
    <div className="absolute right-0 top-[380px] w-[15px] h-[62px] bg-[#4c4c4c] rounded-l-[4px] flex items-center justify-center text-[#888] text-[11px]">›</div>
  </div>
);

type Row = { t: string; kind: 'leaf' | 'group' | 'last'; on?: boolean; focus?: boolean };
const rows: Row[] = [
  { t: '吊顶', kind: 'leaf' }, { t: '独立柱装修', kind: 'leaf' }, { t: '单梁装修', kind: 'last' },
  { t: '基坑支护', kind: 'group' }, { t: '支护桩', kind: 'leaf' }, { t: '支撑梁', kind: 'leaf' }, { t: '格构柱', kind: 'leaf' }, { t: '钢桩', kind: 'leaf' },
  { t: '钢支撑', kind: 'leaf' }, { t: '钢节点', kind: 'leaf' }, { t: '桩间挂网', kind: 'leaf' }, { t: '土钉墙', kind: 'leaf' }, { t: '斜支撑', kind: 'last' },
  { t: '土方', kind: 'group' }, { t: '大开挖土方', kind: 'leaf' }, { t: '基槽土方', kind: 'leaf' }, { t: '基坑土方', kind: 'leaf' }, { t: '大开挖灰土回填', kind: 'leaf' },
  { t: '基槽灰土回填', kind: 'leaf' }, { t: '基坑灰土回填', kind: 'leaf' }, { t: '房心回填', kind: 'last' },
  { t: '基础', kind: 'group', focus: true }, { t: '基础梁', kind: 'leaf' }, { t: '筏板基础', kind: 'leaf', on: true }, { t: '筏板主筋', kind: 'leaf' }, { t: '筏板负筋', kind: 'leaf' },
  { t: '基础板带', kind: 'leaf' }, { t: '集水坑', kind: 'leaf', on: true }, { t: '柱墩', kind: 'leaf' }, { t: '独立基础', kind: 'leaf' }, { t: '条形基础', kind: 'leaf' },
  { t: '桩承台', kind: 'leaf', on: true }, { t: '桩', kind: 'leaf' }, { t: '垫层', kind: 'leaf' },
];

const Box = ({ on, part }: { on?: boolean; part?: boolean }) => (
  <span className={`w-[14px] h-[14px] rounded-[2px] border flex items-center justify-center ${on ? 'bg-[#2e80ea] border-[#2e80ea]' : part ? 'bg-[#9ec8fb] border-[#6a8fbd] ring-1 ring-inset ring-white' : 'bg-white border-[#8a8a8a]'}`}>
    {on && <I s={11} className="text-white"><path d="M2.500 8.500l3.500 3.500 7-8" strokeWidth="2.200" /></I>}
  </span>
);

const DisplayPanel = () => (
  <div className="ml-[5px] w-[280px] h-full flex flex-col bg-white border-b border-l border-[#d9d9d9] relative">
    <div className="h-[30px] bg-[#eeeff1] flex items-center shrink-0 pl-[7px] pr-[10px]">
      <Grip /><span className="ml-[12px] text-[#444] pt-px">显示设置</span><span className="ml-auto"><Close /></span>
    </div>
    <div className="h-[26px] flex items-start pl-[3px] gap-1 shrink-0 mt-[3px]">
      <span className="w-[61px] h-[24px] bg-white border border-b-0 border-[#d4d4d4] rounded-t-[3px] flex items-center justify-center text-[#2a84e8]">图元显示</span>
      <span className="w-[60px] h-[23px] mt-px bg-[#dcdcdc] rounded-t-[3px] flex items-center justify-center text-[#444]">楼层显示</span>
    </div>
    <div className="ml-[3px] w-[274px] h-[722px] border border-[#d4d4d4] overflow-hidden text-[#444] shrink-0">
      <div className="h-[20px] grid grid-cols-[133px_63px_63px] border-b border-[#d4d4d4]">
        <span className="flex items-center justify-center pr-4 border-r border-[#d4d4d4]">图层构件</span>
        <span className="flex items-center justify-center bg-[#7db7f5] text-white border border-[#5da4f0]">显示图元</span>
        <span className="flex items-center justify-center border-r border-[#d4d4d4]">显示名称</span>
      </div>
      {rows.map((r) => (
        <div key={r.t} className="h-[21px] grid grid-cols-[133px_63px_63px] border-b border-[#d8d8d8]">
          <div className="h-full flex items-center border-r border-[#d8d8d8] whitespace-nowrap overflow-hidden">
            <span className="w-2 h-full" />
            {r.kind === 'group' ? (
              <>
                <span className="ml-[4px] w-[13px] h-[13px] border border-[#888] rounded-[2px] flex items-center justify-center"><span className="w-[7px] h-px bg-[#555]" /></span>
                <span className="ml-[6px]">{r.t}</span>
              </>
            ) : (
              <>
                <span className="w-[10px] h-full border-l border-[#e4e4e4]" />
                {r.kind === 'last' ? (
                  <span className="w-[18px] h-1/2 self-start border-l border-b border-[#e0e0e0]" />
                ) : (
                  <span className="w-[18px] h-full border-l border-[#e4e4e4] flex items-center"><span className="w-full h-px bg-[#e0e0e0]" /></span>
                )}
                <span className="ml-[5px]">{r.t}</span>
              </>
            )}
          </div>
          <div className={`flex items-center justify-center border-r border-[#d8d8d8] ${r.focus ? 'outline-2 -outline-offset-2 outline-[#777]' : ''}`}><Box on={r.on} part={r.focus} /></div>
          <div className="flex items-center justify-center border-r border-[#d8d8d8]"><Box /></div>
        </div>
      ))}
    </div>
    <div className="mt-[8px] ml-[182px] w-[89px] h-6 bg-white border border-[#cfcfcf] rounded-[3px] flex items-center justify-center text-[#444] whitespace-nowrap">恢复默认设置</div>
    <span className="absolute left-[270px] top-[278px] w-[7px] h-[29px] rounded-t-full bg-[#a8a8a8]" />
    <span className="absolute left-[270px] top-[306px] w-[7px] h-[30px] rounded-b-full bg-gradient-to-b from-[#1fc25f] to-[#7df07d]" />
    <span className="absolute left-[268px] top-[480px] w-[4px] h-[162px] rounded-full bg-[#ededed]" />
  </div>
);

const SBtn = ({ w, on, children, arrow }: { w: string; on?: boolean; children: React.ReactNode; arrow?: boolean }) => (
  <div className={`${w} h-[25px] rounded-[3px] border flex items-center justify-center text-[#4f5a6b] ${on ? 'bg-[#dbe9fa] border-[#4a90e2]' : 'bg-white border-[#b0b0b0]'}`}>
    {children}{arrow && <Ar c="#555" />}
  </div>
);

const StatusBar = () => (
  <div className="h-[31px] bg-[#fbfbfb] flex items-center text-[#444] whitespace-nowrap">
    <span className="w-[92px] pl-[2px]">层高：&nbsp;&nbsp;0.5</span>
    <span className="w-[140px]">标高：&nbsp;-5.25~-4.75</span>
    <span className="w-[110px]">选中图元：0</span>
    <span className="w-[110px]">隐藏图元：0</span>
    <SBtn w="w-6" on><I><path d="M3 2v11h11M3 9h4v4" stroke={B} /></I></SBtn>
    <span className="w-1" />
    <SBtn w="w-[35px]" on arrow><I><rect x="2.500" y="2.500" width="11" height="11" rx="2" /><circle cx="2.500" cy="2.500" r="1" stroke={B} /></I></SBtn>
    <span className="w-[7px]" />
    <SBtn w="w-[25px]"><I><path d="M2 2l12 12M14 2L2 14" /><circle cx="8" cy="8" r="1" stroke={B} /></I></SBtn>
    <span className="w-[6px]" />
    <SBtn w="w-9" arrow><I><path d="M2 12L12 4M2 14.500h12M7 12a4 4 0 0 0-1-3" /></I></SBtn>
    <span className="w-1" />
    <SBtn w="w-[35px]" arrow><I><path d="M1 5h6M4 2v6" /><rect x="6" y="10" width="8" height="4" fill="#555" /></I></SBtn>
    <span className="w-1" />
    <SBtn w="w-6"><I><rect x="2" y="2" width="10" height="11" fill="#888" /><rect x="4" y="4" width="6" height="5" fill="#fff" /><path d="M12 9l3 2.500-3 2.500z" fill="#555" /></I></SBtn>
    <span className="w-1" />
    <SBtn w="w-6"><I><path d="M3 14c0-6 3-10 10-11" /><circle cx="3" cy="14" r="1" /><circle cx="13" cy="3" r="1" /><path d="M10 10l3 2-3 2z" fill="#555" /></I></SBtn>
    <I className="ml-[17px] text-[#444]"><path d="M1.500 14.500L14.500 1.500M14.500 1.500H10M14.500 1.500V6M1.500 14.500H6M1.500 14.500V10" /></I>
    <span className="ml-[3px]">按鼠标左键指定插入点,按右键结束或 ESC 取消</span>
    <span className="ml-auto flex items-center gap-[6px] pr-[11px]">
      <span className="w-[14px] h-[14px] rounded-full bg-[#6cbb1a] flex items-center justify-center"><I s={10} className="text-white"><path d="M2.500 8.500l3.500 3.500 7-8" strokeWidth="2.500" /></I></span>
      实时计算已完成
    </span>
  </div>
);

export default function App() {
  return (
    <div className="relative w-[1928px] h-[1048px] overflow-hidden flex flex-col bg-black text-[12px] leading-none font-['Liberation_Sans','Noto_Sans_CJK_SC',sans-serif]">
      <div className="flex h-[1040px]">
        <div className="w-[1920px] h-full flex flex-col bg-white">
          <TitleBar />
          <TabBar />
          <Ribbon />
          <OptionBar />
          <div className="h-[821px] flex bg-white">
            <NavPanel />
            <MiddlePanels />
            <Canvas />
            <DisplayPanel />
          </div>
          <StatusBar />
        </div>
        <div className="w-2 h-full flex flex-col">
          <div className="h-[20px] bg-[#2a6db5]" />
          <div className="h-[95px] bg-[#eeeeee] border-t border-[#bbb]" />
          <div className="flex-1 bg-black" />
        </div>
      </div>
      <div className="h-2 bg-[#1c2e3c] flex overflow-hidden">
        <span className="ml-[48px] w-[287px] h-full bg-white" />
        <span className="ml-[517px] w-[45px] h-full bg-[#3a4a58]" />
        <span className="ml-[920px] text-white text-[12px] leading-none mt-[1px] font-bold">17:41</span>
      </div>
      <div className="absolute left-[1632px] top-[946px] text-[20.500px] leading-none text-[#8c8c8c]/70 whitespace-nowrap pointer-events-none">激活 Windows</div>
      <div className="absolute left-[1632px] top-[973px] text-[15.500px] leading-none text-[#8c8c8c]/70 whitespace-nowrap pointer-events-none">转到“设置”以激活 Windows。</div>
    </div>
  );
}
